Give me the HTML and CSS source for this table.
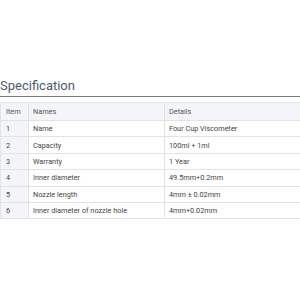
FILE: index.html
```html
<!DOCTYPE html>
<html lang="en">
<head>
    <meta charset="UTF-8">
    <meta name="viewport" content="width=device-width, initial-scale=1.0">
    <title>Specification</title>
    <link rel="stylesheet" href="styles.css">
</head>
<body>
    <div class="spec">
        <h2 class="spec-title">Specification</h2>
        <table class="spec-table">
            <tr class="head">
                <td class="num">Item</td>
                <td class="name">Names</td>
                <td>Details</td>
            </tr>
            <tr>
                <td class="num">1</td>
                <td class="name">Name</td>
                <td>Four Cup Viscometer</td>
            </tr>
            <tr>
                <td class="num">2</td>
                <td class="name">Capacity</td>
                <td>100ml + 1ml</td>
            </tr>
            <tr>
                <td class="num">3</td>
                <td class="name">Warranty</td>
                <td>1 Year</td>
            </tr>
            <tr>
                <td class="num">4</td>
                <td class="name">Inner diameter</td>
                <td>49.5mm+0.2mm</td>
            </tr>
            <tr>
                <td class="num">5</td>
                <td class="name">Nozzle length</td>
                <td>4mm ± 0.02mm</td>
            </tr>
            <tr>
                <td class="num">6</td>
                <td class="name">Inner diameter of nozzle hole</td>
                <td>4mm+0.02mm</td>
            </tr>
        </table>
    </div>
</body>
</html>
```

FILE: styles.css
```css
body {
    margin: 0;
    padding: 0;
    background: #fff;
    font-family: Roboto, "Liberation Sans", Arial, sans-serif;
    overflow: hidden;
}
.spec {
    padding-top: 77px;
    width: 302px;
}
.spec-title {
    margin: 0;
    font-size: 13px;
    font-weight: 400;
    color: #4a5a70;
    line-height: 17px;
    padding-bottom: 2px;
    border-bottom: 1px solid #6f7d90;
}
.spec-table {
    margin-top: 5px;
    width: 100%;
    border-collapse: collapse;
    font-size: 7.3px;
    color: #444;
    box-shadow: 0 2px 3px rgba(0, 0, 0, 0.12);
}
.spec-table td {
    border: 1px solid #e3e3e3;
    height: 15.4px;
    padding: 0 4px;
    text-align: left;
}
.spec-table .head td {
    background: #f4f5f8;
    height: 17px;
    color: #555;
}
.spec-table .num {
    width: 18px;
    padding: 0 4px 0 5px;
    background: #f4f5f8;
}
.spec-table .name {
    width: 127px;
}
```
